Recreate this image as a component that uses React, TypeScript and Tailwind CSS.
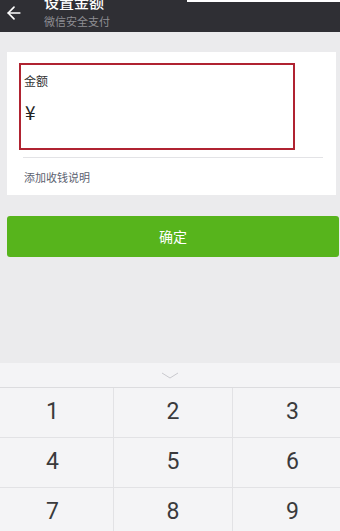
import { ArrowLeft } from "lucide-react";

const keys = ["1", "2", "3", "4", "5", "6", "7", "8", "9"];

export default function App() {
  return (
    <div className="relative w-[340px] h-[531px] overflow-hidden bg-[#ebebed] flex flex-col font-['Noto_Sans_CJK_SC',sans-serif]">
      {/* ── Header ── */}
      <div className="h-[32px] shrink-0 bg-[#2f2f34] flex items-start">
        <ArrowLeft className="w-[20px] h-[20px] text-white mt-[3px] ml-[4px]" strokeWidth={2} />
        <div className="ml-[20px] flex flex-col -mt-[7px]">
          <span className="text-[15px] leading-[18px] text-white font-medium">设置金额</span>
          <span className="text-[11px] leading-[14px] text-[#8e8e93] mt-[3px]">微信安全支付</span>
        </div>
      </div>
      <div className="absolute top-0 left-[187px] w-[153px] h-[2px] bg-white" />

      {/* ── Amount card ── */}
      <div className="mt-[20px] ml-[7px] mr-[4px] bg-white pt-[11px] pb-[11px]">
        <div className="ml-[12px] w-[276px] h-[87px] border-2 border-[#b02331] px-[3px] pt-[8px]">
          <p className="text-[12px] leading-[16px] text-[#333]">金额</p>
          <p className="mt-[12px] ml-[1px] text-[19px] leading-[22px] text-[#222]">¥</p>
        </div>
        <div className="ml-[16px] w-[300px] h-px bg-[#e3e3e6] mt-[7px]" />
        <p className="ml-[17px] mt-[12px] text-[11px] leading-[14px] text-[#5c6270]">添加收钱说明</p>
      </div>

      {/* ── Confirm ── */}
      <button className="mt-[21px] ml-[7px] mr-[1px] h-[41px] shrink-0 rounded-[3px] bg-[#57b41c] text-white text-[14px]">
        确定
      </button>

      {/* ── Keypad ── */}
      <div className="mt-[106px] shrink-0 bg-[#f4f4f6]">
        <div className="h-[25px] flex items-center justify-center border-b border-[#dcdcdf]">
          <svg width="18" height="7" viewBox="0 0 18 7" className="mt-[1px]">
            <path d="M1 1 L9 6 L17 1" fill="none" stroke="#c9c9ce" strokeWidth="1" />
          </svg>
        </div>
        <div className="grid grid-cols-[114px_119px_119px]">
          {keys.map((k, i) => (
            <div
              key={k}
              className={`h-[50px] flex items-center justify-center text-[23px] text-[#3a3a3c] font-['Roboto',sans-serif] border-b border-[#e2e2e5] ${i % 3 !== 2 ? "border-r" : ""} ${i % 3 === 0 ? "pr-[8px]" : ""}`}
            >
              {k}
            </div>
          ))}
        </div>
      </div>
    </div>
  );
}
